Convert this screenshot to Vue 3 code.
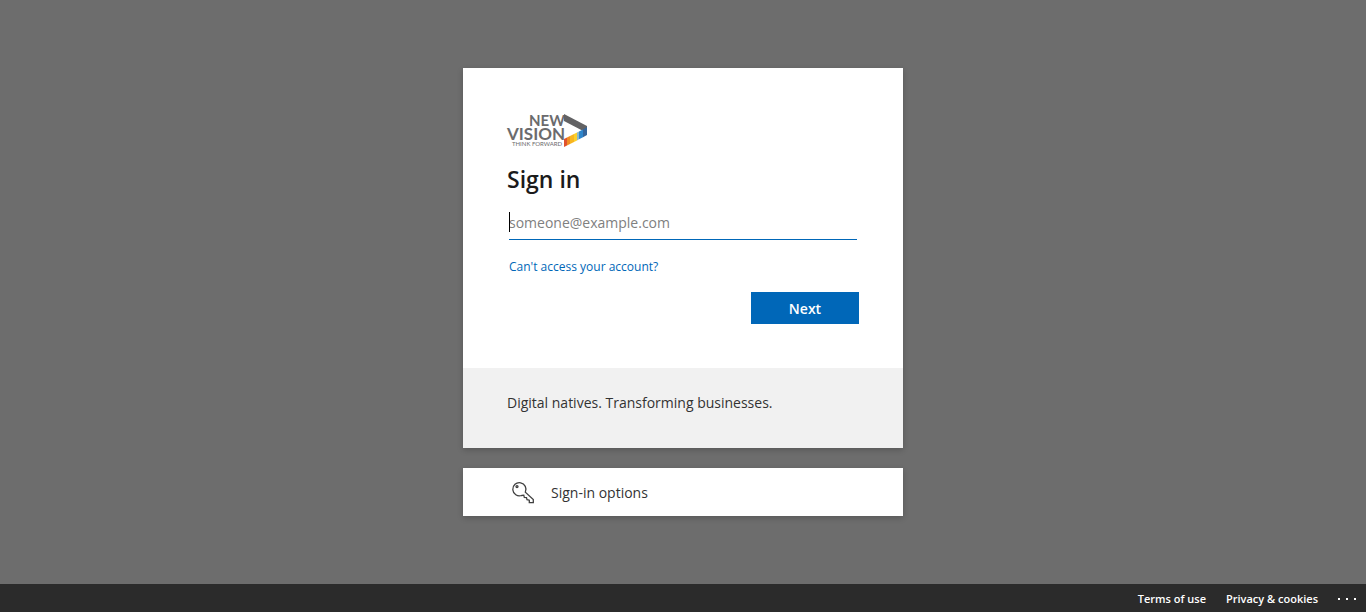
<script setup>
import { ref } from 'vue'

const email = ref('')
</script>

<template>
  <div class="page">
    <main class="stage">
      <form class="card" @submit.prevent>
        <div class="body">
          <svg class="logo" viewBox="0 0 80 36" role="img" aria-label="New Vision, think forward">
            <text class="brand" x="22" y="14">NEW</text>
            <text class="brand wide" x="0" y="28">VISION</text>
            <text class="tagline" x="5" y="34">THINK FORWARD</text>
            <path d="M57 2 80 14V21L57 9Z" fill="#626264" />
            <path d="M57 27 60 25.5V33.5L57 35Z" fill="#e0522d" />
            <path d="M60 25.5 63 24V32L60 33.5Z" fill="#f08c22" />
            <path d="M63 24 67 22V30L63 32Z" fill="#f8b51f" />
            <path d="M67 22 70 20.4V28.4L67 30Z" fill="#fbd02c" />
            <path d="M70 20.4 72 19.4V27.3L70 28.4Z" fill="#8fb9c9" />
            <path d="M72 19.4 76 17.4V25.2L72 27.3Z" fill="#2f86cc" />
            <path d="M76 17.4 80 15V23L76 25.2Z" fill="#35659b" />
          </svg>
          <h1>Sign in</h1>
          <div class="field">
            <input v-model="email" type="email" placeholder="someone@example.com" aria-label="Email address" />
            <span class="caret"></span>
          </div>
          <a class="help" href="#">Can't access your account?</a>
          <div class="actions">
            <button type="submit" class="next">Next</button>
          </div>
        </div>
        <p class="note">Digital natives. Transforming businesses.</p>
      </form>
      <button type="button" class="options">
        <svg viewBox="0 0 24 24" aria-hidden="true">
          <path d="M14.3 11.2A6.6 6.6 0 1 0 10.6 14.5L12.8 14.2 13.3 16.3 15.5 16.5 16 18.7 18.3 19.2V21.6H22.3V18.6Z" />
          <circle cx="6" cy="5.6" r="1" />
        </svg>
        <span>Sign-in options</span>
      </button>
    </main>
    <footer>
      <a href="#">Terms of use</a>
      <a href="#">Privacy &amp; cookies</a>
      <button type="button" class="more" aria-label="More options"><i></i><i></i><i></i></button>
    </footer>
  </div>
</template>

<style>
body {
  margin: 0;
}
</style>

<style scoped>
.page {
  display: flex;
  flex-direction: column;
  min-height: 100vh;
  background: #6d6d6d;
  color: #1b1b1b;
  font-family: "Segoe UI", "Open Sans", "Noto Sans", sans-serif;
}
.page * {
  box-sizing: border-box;
}
.stage {
  flex: 1;
  display: flex;
  flex-direction: column;
  align-items: center;
  justify-content: center;
  gap: 20px;
}
.card,
.options {
  width: 100%;
  max-width: 440px;
  background: #fff;
  box-shadow: 0 2px 6px rgba(0, 0, 0, 0.2);
}
.body {
  display: flex;
  flex-direction: column;
  padding: 44px;
}
.logo {
  display: block;
  width: 80px;
  height: 36px;
  overflow: visible;
}
.brand {
  font-family: Lato, sans-serif;
  font-size: 15px;
  font-weight: 700;
  fill: #6b6b6d;
}
.wide {
  font-size: 17px;
}
.tagline {
  font-family: Lato, sans-serif;
  font-size: 6px;
  font-weight: 400;
  fill: #6b6b6d;
}
h1 {
  margin: 15px 0 13px;
  font-size: 23px;
  font-weight: 600;
  line-height: 32px;
}
.field {
  position: relative;
  margin: 0 2px;
}
.field input {
  display: block;
  width: 100%;
  height: 32px;
  padding: 0 0 3px;
  border: 0;
  border-bottom: 1px solid #0067b8;
  border-radius: 0;
  outline: none;
  background: transparent;
  font: 400 14px/20px "Open Sans", sans-serif;
}
.field input::placeholder {
  color: #808080;
  opacity: 1;
}
.caret {
  position: absolute;
  left: 0;
  top: 4px;
  width: 1px;
  height: 20px;
  background: #000;
}
.help {
  align-self: flex-start;
  margin: 17px 2px 15px;
  color: #0067b8;
  font-size: 12px;
  line-height: 20px;
  text-decoration: none;
}
.actions {
  display: flex;
  justify-content: flex-end;
}
.next {
  width: 108px;
  height: 32px;
  padding: 1px 0 0;
  border: 0;
  background: #0067b8;
  color: #fff;
  font: 600 14px/20px "Open Sans", sans-serif;
}
.note {
  margin: 0;
  padding: 25px 44px 35px;
  background: #f1f1f1;
  color: #333;
  font-size: 14px;
  line-height: 20px;
}
.options {
  display: flex;
  align-items: center;
  gap: 16px;
  height: 48px;
  padding: 1px 48px 0;
  border: 0;
  color: #333;
  font: 400 14px/20px "Open Sans", sans-serif;
}
.options svg {
  width: 24px;
  height: 24px;
  fill: none;
  stroke: #404040;
  stroke-width: 1.3;
}
footer {
  display: flex;
  align-items: center;
  justify-content: flex-end;
  gap: 20px;
  height: 28px;
  padding: 2px 10px 0 0;
  background: #2b2b2b;
}
footer a {
  color: #fff;
  font-size: 11px;
  font-weight: 600;
  line-height: 20px;
  text-decoration: none;
}
.more {
  display: flex;
  gap: 6px;
  padding: 0;
  border: 0;
  background: none;
}
.more i {
  width: 2px;
  height: 2px;
  background: #fff;
}
</style>
